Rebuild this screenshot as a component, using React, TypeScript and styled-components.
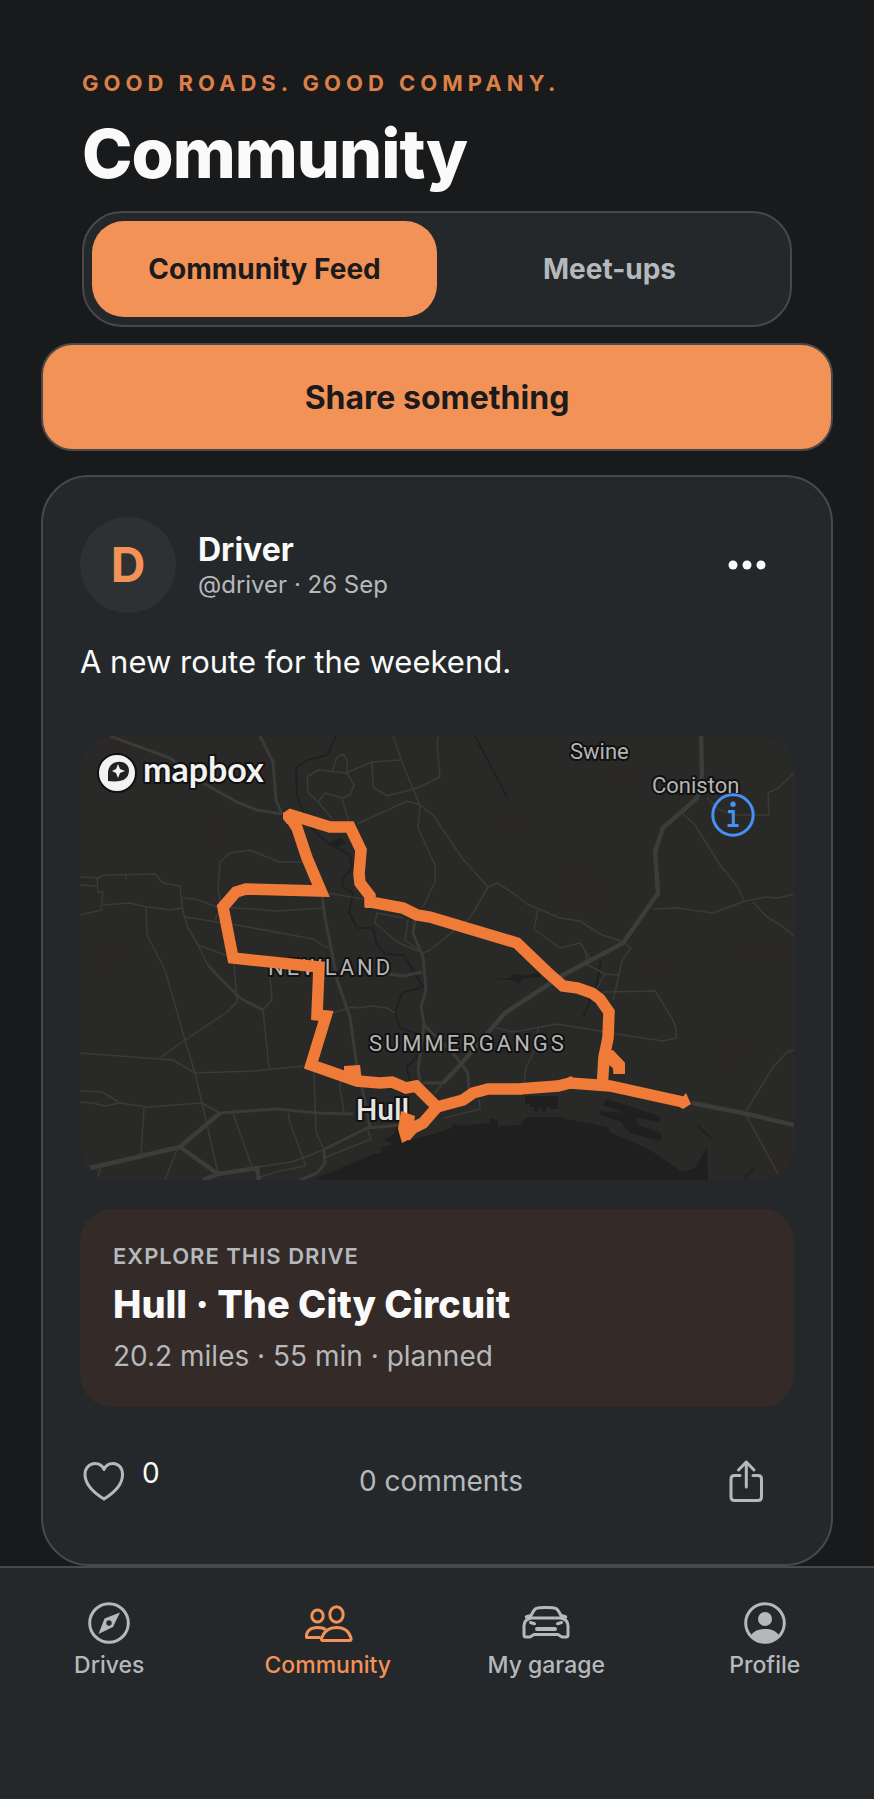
import { useState } from "react";
import styled, { createGlobalStyle } from "styled-components";

const GlobalStyle = createGlobalStyle`
    :root{
        --background: #191a1b;
        --foreground: #24282a;
        --raised: #2d3133;
        --line: #47494b;
        --accent: #f39256;
        --text: #fafafa;
        --muted: #b6b9bc;
    }

    *{
        box-sizing: border-box;
    }

    body{
        margin: 0;
        background-color: var(--background);
        color: var(--text);
        font-family: Inter, "Liberation Sans", sans-serif;
    }

    button{
        padding: 0;
        border: 0;
        background: none;
        color: inherit;
        font-family: inherit;
        cursor: pointer;
    }

    svg{
        display: block;
    }
`;

const Page = styled.div`
    min-height: 100vh;
    display: flex;
    flex-direction: column;
`;

const Main = styled.main`
    flex: 1;
    padding: 69px 41px 0;
`;

const Header = styled.header`
    padding: 0 41px;
`;

const Tagline = styled.p`
    margin: 0 0 20px;
    color: #dd8047;
    font-size: 22px;
    line-height: 28px;
    font-weight: 700;
    letter-spacing: 5px;
    text-transform: uppercase;
`;

const Title = styled.h1`
    margin: 0 0 22px;
    font-size: 68px;
    line-height: 72px;
    font-weight: 800;
    letter-spacing: -1px;
`;

const Segments = styled.div`
    display: grid;
    grid-template-columns: 1fr 1fr;
    height: 116px;
    padding: 8px;
    border: 2px solid var(--line);
    border-radius: 40px;
    background-color: var(--foreground);
`;

const Segment = styled.button<{ $active: boolean }>`
    border-radius: 32px;
    background-color: ${({ $active }) => $active ? "var(--accent)" : "transparent"};
    color: ${({ $active }) => $active ? "#1b1b1b" : "var(--muted)"};
    font-size: 28px;
    font-weight: 700;
`;

const ShareButton = styled.button`
    width: 100%;
    height: 108px;
    margin: 16px 0 24px;
    border: 2px solid var(--line);
    border-radius: 32px;
    background-color: var(--accent);
    color: #1b1b1b;
    font-size: 32px;
    font-weight: 700;
`;

const Post = styled.article`
    padding: 40px 37px 57px;
    border: 2px solid var(--line);
    border-radius: 48px;
    background-color: var(--foreground);
`;

const Author = styled.div`
    display: flex;
    align-items: center;
    gap: 22px;
`;

const Avatar = styled.div`
    width: 96px;
    height: 96px;
    border-radius: 50%;
    background-color: var(--raised);
    color: var(--accent);
    font-size: 48px;
    line-height: 96px;
    font-weight: 700;
    text-align: center;
`;

const AuthorText = styled.div`
    flex: 1;
    padding-top: 4px;
`;

const Name = styled.h2`
    margin: 0;
    font-size: 32px;
    line-height: 36px;
    font-weight: 700;
`;

const Handle = styled.p`
    margin: 0;
    color: var(--muted);
    font-size: 24px;
    line-height: 34px;
`;

const IconButton = styled.button`
    width: 96px;
    height: 52px;
    display: grid;
    place-items: center;
    color: var(--muted);
`;

const MoreButton = styled(IconButton)`
    color: var(--text);
`;

const Message = styled.p`
    margin: 27px 0 52px;
    font-size: 31px;
    line-height: 44px;
`;

const MapFrame = styled.div`
    position: relative;
    overflow: hidden;
    border-radius: 32px;

    > svg{
        width: 100%;
        height: auto;
    }
`;

const InfoButton = styled.button`
    position: absolute;
    top: 57px;
    right: 39px;
    color: #4591f5;
`;

const DriveLink = styled.a`
    display: grid;
    gap: 12px;
    margin-top: 29px;
    padding: 33px;
    border-radius: 32px;
    background-color: #342a27;
    color: var(--muted);
    text-decoration: none;
`;

const DriveLabel = styled.span`
    font-size: 22px;
    line-height: 28px;
    font-weight: 600;
    letter-spacing: 1px;
    text-transform: uppercase;
`;

const DriveTitle = styled.strong`
    color: var(--text);
    font-size: 38px;
    line-height: 44px;
    font-weight: 800;
`;

const DriveMeta = styled.span`
    font-size: 28px;
    line-height: 36px;
`;

const Actions = styled.div`
    display: flex;
    justify-content: space-between;
    align-items: center;
    margin-top: 48px;
`;

const LikeButton = styled.button`
    display: flex;
    gap: 18px;
    min-width: 104px;
    height: 52px;
    font-size: 28px;
    line-height: 36px;

    svg{
        align-self: center;
        color: var(--muted);
    }
`;

const CommentsButton = styled.button`
    color: var(--muted);
    font-size: 28px;
    line-height: 36px;
`;

const NavBar = styled.nav`
    display: grid;
    grid-template-columns: repeat(4, 1fr);
    padding: 33px 0 120px;
    border-top: 2px solid var(--line);
    background-color: var(--foreground);
`;

const NavLink = styled.a<{ $active?: boolean }>`
    display: grid;
    justify-items: center;
    gap: 6px;
    color: ${({ $active }) => $active ? "var(--accent)" : "var(--muted)"};
    font-size: 23px;
    line-height: 28px;
    font-weight: 500;
    text-decoration: none;
`;

const HeartIcon = () => (
    <svg width="44" height="44" viewBox="0 0 44 44" fill="none" stroke="currentColor" strokeWidth="3" strokeLinejoin="round">
        <path d="M24 40C15 34.500 5 26 5 15.500C5 9 9.500 4.500 15 4.500C19.500 4.500 22.500 7 24 10.500C25.500 7 28.500 4.500 33 4.500C38.500 4.500 42.500 9 42.500 15.500C42.500 26 33 34.500 24 40Z" />
    </svg>
);

const ShareIcon = () => (
    <svg width="44" height="44" viewBox="0 0 44 44" fill="none" stroke="currentColor" strokeWidth="3" strokeLinecap="round" strokeLinejoin="round">
        <path d="M16 16.500H10.500Q7 16.500 7 20V38Q7 41.500 10.500 41.500H34Q37.500 41.500 37.500 38V20Q37.500 16.500 34 16.500H29" />
        <path d="M22.300 28V3M14.500 11L22.300 3L30 11" />
    </svg>
);

const DotsIcon = () => (
    <svg width="40" height="12" viewBox="0 0 40 12" fill="currentColor">
        <circle cx="7" cy="6" r="4.500" />
        <circle cx="21" cy="6" r="4.500" />
        <circle cx="35" cy="6" r="4.500" />
    </svg>
);

const InfoIcon = () => (
    <svg width="44" height="44" viewBox="0 0 44 44" fill="none" stroke="currentColor" strokeWidth="3">
        <circle cx="22" cy="22" r="20.200" />
        <circle cx="22" cy="11.300" r="2.700" fill="currentColor" stroke="none" />
        <path d="M17 18.500H22.300V32.500M16.500 32.500H27.500" />
    </svg>
);

const CompassIcon = () => (
    <svg width="44" height="44" viewBox="0 0 44 44" fill="none">
        <circle cx="22" cy="22" r="19.300" stroke="currentColor" strokeWidth="3" />
        <path fill="currentColor" fillRule="evenodd" d="M33 11.500L26 26L11.500 33L17.500 17.500ZM22 19.300A2.700 2.700 0 1 0 22 24.700A2.700 2.700 0 1 0 22 19.300Z" />
    </svg>
);

const PeopleIcon = () => (
    <svg width="50" height="44" viewBox="0 0 50 44" fill="none" stroke="currentColor" strokeWidth="3" strokeLinejoin="round">
        <ellipse cx="14.500" cy="15" rx="5.700" ry="6" />
        <ellipse cx="33.500" cy="13.500" rx="6.700" ry="7.700" />
        <path d="M17.500 36.500H3.500C3 29.500 8 26.500 14.500 26.500C18 26.500 20.500 27 22.500 28.500" />
        <path d="M20 39.500H46.500Q48.500 39.500 48 37C46 30 40.500 26.500 33.500 26.500C26.500 26.500 21 30 18.500 37Q18 39.500 20 39.500Z" />
    </svg>
);

const CarIcon = () => (
    <svg width="48" height="44" viewBox="0 0 48 44" fill="none" stroke="currentColor" strokeWidth="3" strokeLinecap="round" strokeLinejoin="round">
        <path d="M8 17C10 12 12 9 14 7.500Q16 6.500 24 6.500Q32 6.500 34 7.500C36 9 38 12 40 17" />
        <path d="M4.500 16L8 15M43.500 16L40 15" strokeWidth="3.500" />
        <path d="M9 17H39Q46 18.500 46 25V34Q46 36 44 36H40L36 33.500H12L8 36H4Q2 36 2 34V25Q2 18.500 9 17Z" />
        <path d="M8.500 21.500L12.500 22.700M39.500 21.500L35.500 22.700" />
        <path d="M15 28H33" strokeWidth="4" />
    </svg>
);

const ProfileIcon = () => (
    <svg width="44" height="44" viewBox="0 0 44 44" fill="none">
        <circle cx="22" cy="22" r="19.300" stroke="currentColor" strokeWidth="3" />
        <circle cx="22" cy="18" r="7" fill="currentColor" />
        <path fill="currentColor" d="M8 34.500C11 29.500 16 28 22 28C28 28 33 29.500 36 34.500A20 20 0 0 1 8 34.500Z" />
    </svg>
);

const MapLabel = styled.text<{ $spaced?: boolean }>`
    fill: #b5b5b4;
    stroke: #111;
    stroke-width: 4px;
    stroke-linejoin: round;
    paint-order: stroke;
    font-family: Roboto, sans-serif;
    font-size: 22px;
    letter-spacing: ${({ $spaced }) => $spaced ? "3px" : "0"};
`;

const CityLabel = styled(MapLabel)`
    fill: #e4e4e4;
    font-size: 30px;
    font-weight: 500;
`;

const Wordmark = styled(MapLabel)`
    fill: #f2f2f2;
    font-family: Lato, sans-serif;
    font-size: 34px;
    font-weight: 700;
`;

const minorRoads = [
    "227,41 238,34 267,37 274,49 270,59 263,62 245,57 238,66 228,56 227,41",
    "252,36 257,21 263,18 267,24 267,37",
    "238,66 253,84", "262,63 270,89",
    "268,36 292,26 320,24", "292,26 293,51 307,60 337,52 360,41 357,9 358,0",
    "313,0 323,29 340,69 338,92 355,129 355,146 343,171",
    "277,88 327,65 340,69 353,79 382,122 408,151 390,182 350,214 343,217 317,206 295,187 297,177 323,182",
    "328,184 325,204 343,217",
    "408,151 417,147 433,157 447,168 480,182 500,185 520,198 543,206 551,212 542,224 539,239 533,264",
    "458,174 454,193 480,212 500,207 510,222",
    "573,173 597,172 633,177 665,165 685,161 698,162 714,158",
    "603,78 615,89 640,129 658,151 664,165", "673,166 687,181 702,190 714,200",
    "627,62 638,73 655,79 689,79 688,57 698,52 714,37",
    "0,141 17,142 25,139 75,138 83,147 100,150 103,176 108,192 118,209 128,229",
    "17,142 18,156 23,156 21,174 0,179", "0,149 16,150",
    "23,169 50,167 67,171 90,174 103,172", "46,139 46,143",
    "66,171 67,199 85,234 105,304 115,337 122,367 138,437",
    "103,162 115,163 137,171 157,172 197,175 243,172",
    "105,181 157,189 233,203 245,211 250,211", "135,184 141,170 138,152 140,126 150,117 170,114 187,121 200,126 222,126",
    "247,157 283,163", "118,209 153,222",
    "0,317 93,324 115,337 173,335 223,330",
    "80,322 105,304 147,276 157,266 154,227", "190,241 192,264 183,274 189,332",
    "0,355 22,356 40,367 67,371 122,367 140,377", "0,366 13,367 25,370 40,367",
    "64,372 61,419", "98,411 85,444", "153,377 172,431",
    "208,377 210,387 226,430 200,435 180,441", "234,334 236,396 244,414",
    "177,431 212,426 243,414", "244,422 291,403 287,392", "261,340 260,352 264,376",
    "253,277 272,271 277,272 292,270 307,272 315,277",
    "413,291 433,296 477,288 550,300 583,305 596,302 596,292 592,282 575,255 523,256",
    "458,292 455,314 446,331 444,347", "505,214 508,229 525,238 539,239", "525,238 515,256",
    "364,382 400,373 399,363", "354,358 363,347",
    "665,377 693,331 707,316 714,314", "665,377 698,438", "20,431 18,444",
];

const majorRoads = [
    "30,0 90,22 123,47 157,66 177,74 202,78",
    "180,0 193,26 196,64 202,78",
    "242,159 245,182 253,222 257,244 270,281 277,331 283,357 290,391",
    "335,182 333,197 343,221 346,254 341,270 344,289 338,334 342,354",
    "300,237 323,240 342,236", "344,289 373,317 388,337 389,357",
    "343,347 363,347",
    "128,229 140,242 160,262 183,274",
    "140,377 197,373 237,377 273,378",
    "243,414 287,392 320,389", "244,414 245,427 237,437 220,444",
];

const trunkRoads = [
    "621,0 622,39 617,62 583,92 575,116 578,157 543,207 483,239 425,277 380,329 363,347",
    "10,432 100,411 140,377", "100,411 138,438 177,432 179,444", "138,438 123,444",
    "612,367 663,377 714,389",
];

const Roads = ({ lines, color, width }: { lines: string[], color: string, width: number }) => (
    <g fill="none" stroke={color} strokeWidth={width} strokeLinejoin="round">
        {lines.map(points => <polyline key={points} points={points} />)}
    </g>
);

const RouteMap = () => (
    <svg viewBox="0 0 714 444" role="img" aria-label="Route around Hull">
        <rect width="714" height="444" fill="#292928" />
        {/* woodland and parks */}
        <g fill="#2c2828">
            <path d="M421 72L440 80L452 90L436 100L410 103ZM482 130L496 122L508 145L532 160L520 175L480 173L478 160ZM530 32L558 27L556 42L541 52ZM568 225L590 220L594 230L585 240L568 238ZM635 315L670 302L673 323L628 332ZM660 205L678 195L685 210L714 205V225L664 222ZM690 410L714 405V444H704Z" />
            <path d="M122 85L148 70L150 105L122 110ZM20 0H50V18L20 24ZM10 210H40V236H10ZM176 10H188V40H170Z" />
        </g>
        {/* estuary and docks */}
        <g fill="#1f1f1f">
            <path d="M240 444L295 419L302 417L300 412L323 406L350 399L372 392L373 388L383 390L409 387L411 382L417 384L418 390L440 389L447 381L480 381L482 382L484 381L486 383L528 391L530 396L570 414L602 436L615 432L627 411L628 444Z" />
            <path d="M255 440L303 417L294 418L232 444ZM304 404L314 398L316 391L324 396L330 405L318 410Z" />
            <path d="M445 360L477 360V371H466V376H462V372H458V375H454V371H450V368H445ZM470 364L478 361V373H470ZM526 363L580 380V386L557 382L556 388L582 398L581 405L550 397L541 386L520 379V375L544 377L523 369Z" />
            <path d="M412 243L430 242L433 238L444 240L460 236V241L442 243L439 248L433 244ZM252 106L260 102L266 107L258 111L250 109Z" />
        </g>
        <Roads
            color="#202020"
            width={2}
            lines={[
                "256,0 247,19 227,24 216,32 217,59 228,89 248,107 270,119 272,132 262,144 263,151 273,157 269,176 277,192 293,192 297,209 305,218 323,219 333,234 343,251 322,257 315,277 320,292 340,299 345,312 327,331 330,346",
                "395,0 427,61", "521,224 516,252 503,281", "617,389 624,396 632,403", "674,431 664,444",
            ]}
        />
        <Roads lines={minorRoads} color="#3a3a39" width={1.5} />
        <Roads lines={majorRoads} color="#3a3a39" width={3} />
        <Roads lines={trunkRoads} color="#3c3c3b" width={4.500} />

        <MapLabel x="490" y="23">Swine</MapLabel>
        <MapLabel x="572" y="57">Coniston</MapLabel>
        <MapLabel x="188" y="239" $spaced>NEWLAND</MapLabel>
        <MapLabel x="289" y="315" $spaced>SUMMERGANGS</MapLabel>
        <CityLabel x="276" y="384">Hull</CityLabel>

        <g fill="none" stroke="#f07b38" strokeWidth="11.500" strokeMiterlimit="2.400">
            <path d="M522 354L524 321L528 302L529 276L520 263L512 257L498 252L483 250L466 235L437 207L350 181L337 179L323 172L290 166V160L280 147L279 138L281 114L270 91H250L208 78L217 92L227 122L241 155L166 153L156 156L143 171L153 222L239 231L237 279L246 280L231 329L277 345L300 347L312 346L326 352L336 350L343 357L357 371L343 387L333 392L325 401" />
            <path d="M357 371L383 364L393 357L408 353L438 353L478 350L490 347L517 349L530 350L603 366" />
            <path d="M527 327L532 322L539 329V338" />
        </g>
        <g fill="#f07b38">
            <path d="M264 330L280 329L282 345L273 349L264 344ZM321 375L335 380L333 396L328 404L322 407L318 393ZM606 357L611 368L603 373L596 369ZM332 177L343 174L336 184ZM285 158L294 160V172H285ZM203 77L209 73L216 76L214 88L207 88L203 83ZM435 350H443L442 359L435 356ZM484 344L491 340L495 344L488 352ZM533 314L545 327V338H536L530 328Z" />
        </g>

        <circle cx="37" cy="37" r="19" fill="#f2f2f2" stroke="#111" strokeWidth="2" />
        <path fill="#222" d="M28 45V37C28 23 48 22 49 34C49 46 37 46 28 45Z" />
        <path fill="#f2f2f2" d="M38 28L40 33L45 35L40 37L38 42L36 37L32 35L36 33Z" />
        <Wordmark x="63" y="46">mapbox</Wordmark>
    </svg>
);

const navItems = [
    { label: "Drives", icon: <CompassIcon /> },
    { label: "Community", icon: <PeopleIcon /> },
    { label: "My garage", icon: <CarIcon /> },
    { label: "Profile", icon: <ProfileIcon /> },
];

export default function App() {
    const [tab, setTab] = useState("Community Feed");

    return (
        <Page>
            <GlobalStyle />
            <Main>
                <Header>
                    <Tagline>Good roads. Good company.</Tagline>
                    <Title>Community</Title>
                    <Segments>
                        {["Community Feed", "Meet-ups"].map(name =>
                            <Segment key={name} $active={tab === name} aria-pressed={tab === name} onClick={() => setTab(name)}>
                                {name}
                            </Segment>
                        )}
                    </Segments>
                </Header>
                <ShareButton>Share something</ShareButton>
                <Post>
                    <Author>
                        <Avatar>D</Avatar>
                        <AuthorText>
                            <Name>Driver</Name>
                            <Handle>@driver · 26 Sep</Handle>
                        </AuthorText>
                        <MoreButton aria-label="More options"><DotsIcon /></MoreButton>
                    </Author>
                    <Message>A new route for the weekend.</Message>
                    <MapFrame>
                        <RouteMap />
                        <InfoButton aria-label="Map information"><InfoIcon /></InfoButton>
                    </MapFrame>
                    <DriveLink href="#drive">
                        <DriveLabel>Explore this drive</DriveLabel>
                        <DriveTitle>Hull · The City Circuit</DriveTitle>
                        <DriveMeta>20.2 miles · 55 min · planned</DriveMeta>
                    </DriveLink>
                    <Actions>
                        <LikeButton aria-label="Like"><HeartIcon />0</LikeButton>
                        <CommentsButton>0 comments</CommentsButton>
                        <IconButton aria-label="Share"><ShareIcon /></IconButton>
                    </Actions>
                </Post>
            </Main>
            <NavBar>
                {navItems.map(({ label, icon }) =>
                    <NavLink key={label} href="#" $active={label === "Community"}>
                        {icon}
                        {label}
                    </NavLink>
                )}
            </NavBar>
        </Page>
    )
}
